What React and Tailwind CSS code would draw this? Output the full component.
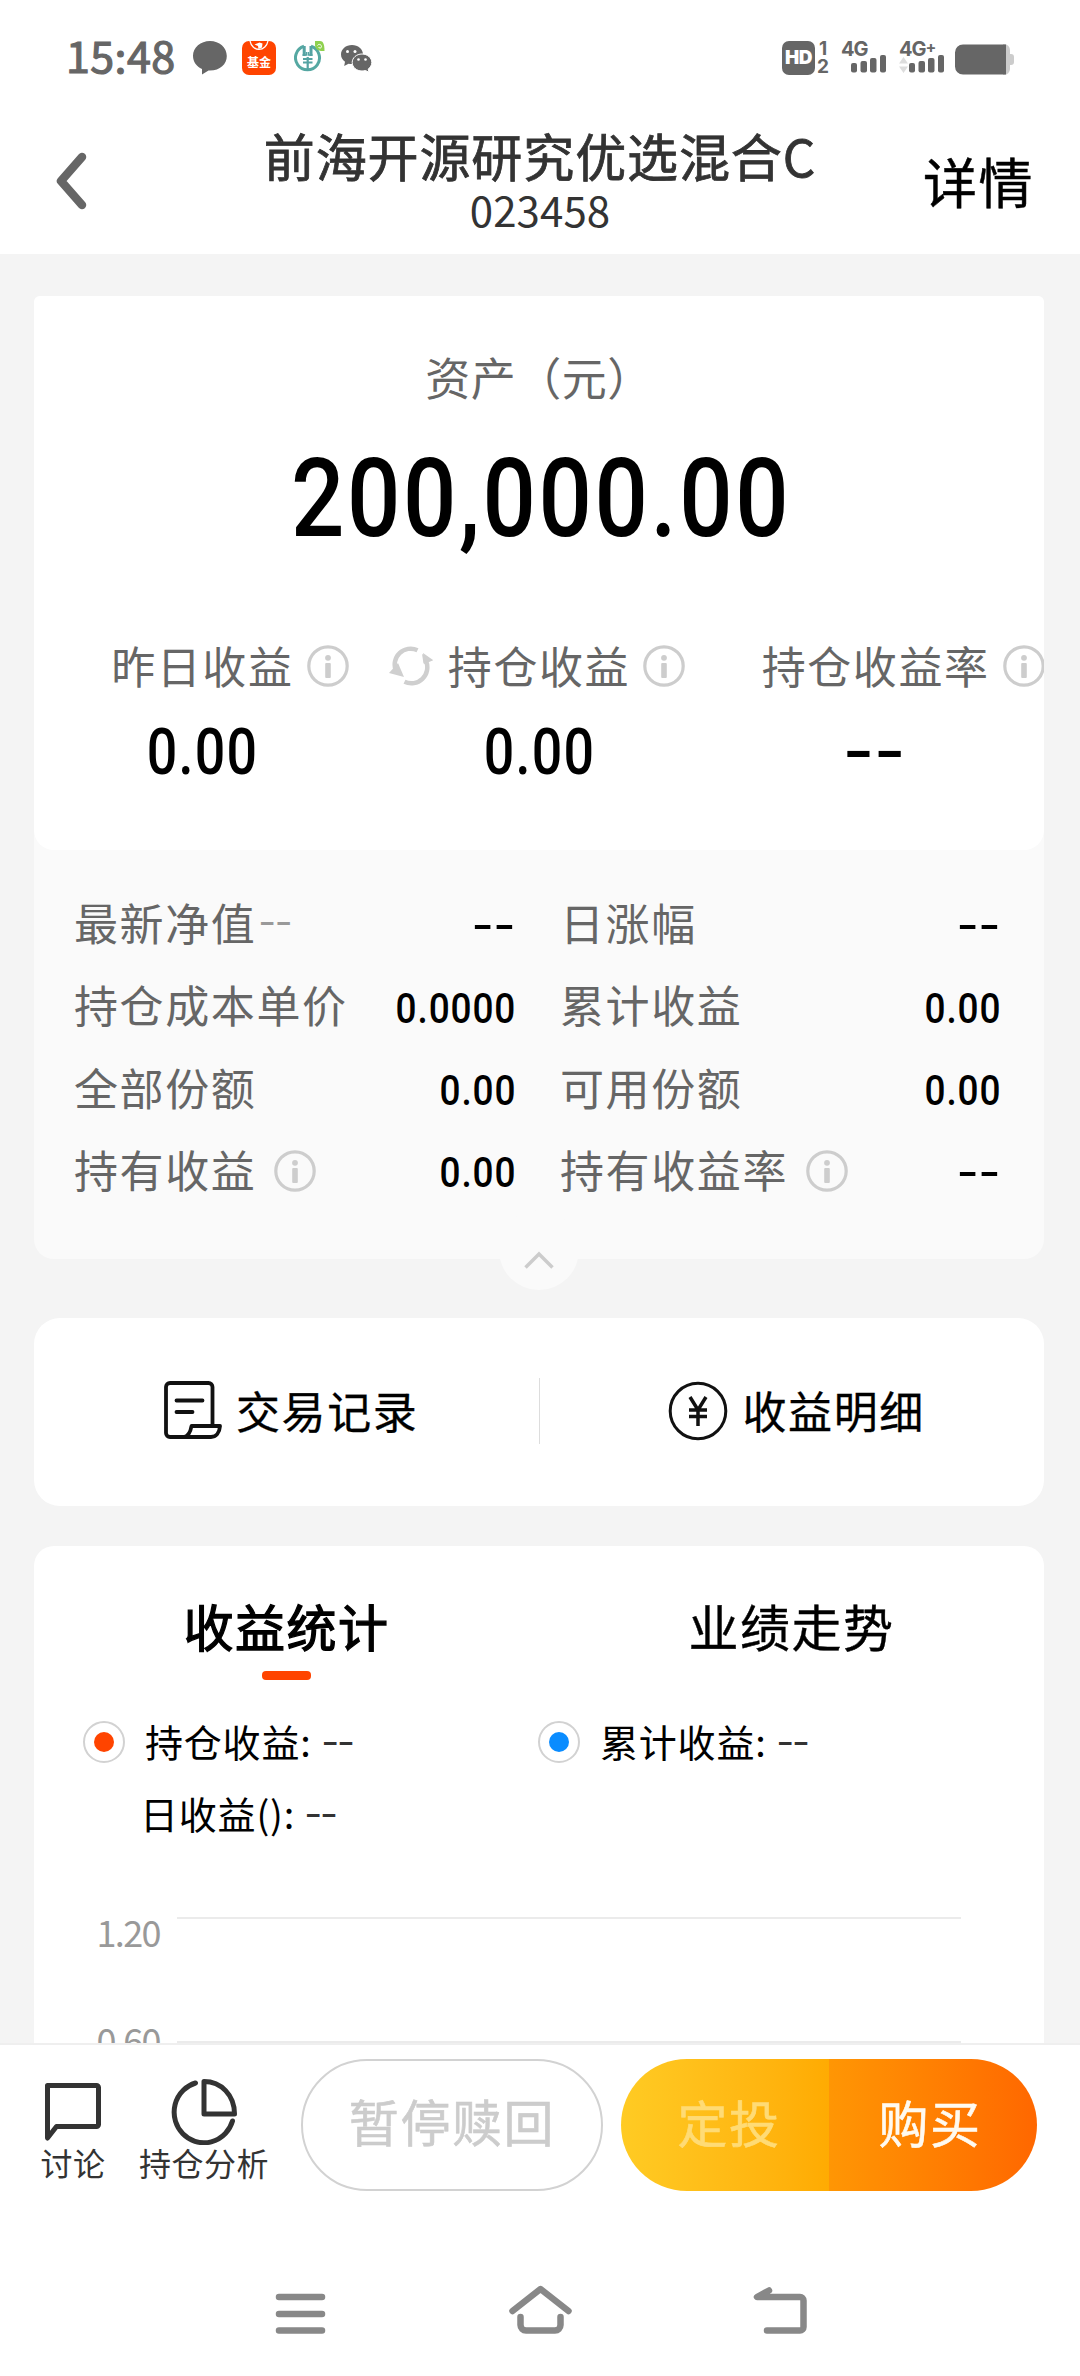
const details = [
  [
    { label: '最新净值', note: '--', value: '--' },
    { label: '日涨幅', value: '--' },
  ],
  [
    { label: '持仓成本单价', value: '0.0000' },
    { label: '累计收益', value: '0.00' },
  ],
  [
    { label: '全部份额', value: '0.00' },
    { label: '可用份额', value: '0.00' },
  ],
  [
    { label: '持有收益', value: '0.00', info: true },
    { label: '持有收益率', value: '--', info: true },
  ],
];

function InfoIcon({ className = '' }) {
  return (
    <svg className={`w-[42px] h-[42px] shrink-0 ${className}`} viewBox="0 0 42 42" fill="none">
      <circle cx="21" cy="21" r="19.2" stroke="#cdcdcd" strokeWidth="3.2" />
      <circle cx="21" cy="12.8" r="2.9" fill="#cdcdcd" />
      <rect x="18.2" y="18" width="5.6" height="15" rx="1" fill="#cdcdcd" />
    </svg>
  );
}

function RefreshIcon({ className = '' }) {
  return (
    <svg className={`w-[44px] h-[40px] ${className}`} viewBox="0 0 44 40" fill="none">
      <path d="M7 25A16 16 0 0 1 28.5 4.2" stroke="#cfcfcf" strokeWidth="4.500" />
      <path d="M37 15A16 16 0 0 1 15.5 35.8" stroke="#cfcfcf" strokeWidth="4.500" />
      <path d="M33 8l11 6.5-9.5 3z" fill="#cfcfcf" />
      <path d="M0 27l9-10 6 14z" fill="#cfcfcf" />
      <path d="M34 7l1 11 9-4z" fill="#cfcfcf" />
    </svg>
  );
}

function SignalBars() {
  return (
    <svg className="w-[36px] h-[18px]" viewBox="0 0 36 18" fill="#666">
      <rect x="0" y="8" width="6" height="9.500" rx="2" />
      <rect x="9.500" y="6" width="6.500" height="11.500" rx="2" />
      <rect x="19" y="3" width="6.500" height="14.500" rx="2" />
      <rect x="29" y="0" width="6" height="17.500" rx="2" />
    </svg>
  );
}

function StatusBar() {
  return (
    <div className="h-[116px] flex items-center text-[#666]">
      <span className="w-[125px] pl-[66px] pb-[7px] text-[43px] leading-none tracking-[0.4px] whitespace-nowrap [-webkit-text-stroke:1.2px_#666]">
        15:48
      </span>
      <svg className="ml-[68px] w-[34px] h-[34px]" viewBox="0 0 34 34" fill="#666">
        <path d="M17 0C7.600 0 0 6.500 0 14.800c0 6 3.500 10.800 9 13.200V33.500l6.500-4c11 .6 18.300-6 18.300-14.500C33.800 6.500 26.400 0 17 0z" />
      </svg>
      <span className="relative ml-[15px] w-[34px] h-[34px] rounded-[7px] bg-[#ff4400] text-white overflow-hidden flex justify-center">
        <svg className="absolute top-0 left-[7px] w-[20px] h-[12px]" viewBox="0 0 20 12" fill="none">
          <path d="M1 0a9.200 10.500 0 0 0 18 0" stroke="#fff" strokeWidth="1.300" />
          <path d="M5.500 3.500l5-2 3 1-.5 4-3.500 1.500-.5-3z" fill="#fff" />
        </svg>
        <span className="mt-[14px] text-[12px] leading-[14px] font-bold whitespace-nowrap">基金</span>
      </span>
      <svg className="ml-[18px] w-[32px] h-[34px]" viewBox="0 0 32 34" fill="none">
        <path d="M10 5.300a12 12 0 1 0 7 0" stroke="#55a8a2" strokeWidth="3" />
        <path d="M10.200 5v10M17 5v10" stroke="#55a3a3" strokeWidth="3" />
        <path d="M8.500 14h4v-3M18.500 14h-4v-3" stroke="#55a3a3" strokeWidth="1.500" />
        <path d="M9 18h4M14.500 18h4M9 21.500h9.500M13.700 16v14" stroke="#55a3a3" strokeWidth="2.200" />
        <path d="M21 0h5c3 0 4.500 3 4.500 10-6 .5-9.500-2-9.500-6z" fill="#8fd14f" />
        <path d="M23.500 4.500c1-2 4-1 4 1s-2.500 2-3 .5" stroke="#fff" strokeWidth="1" />
      </svg>
      <svg className="ml-[15px] w-[31px] h-[28px]" viewBox="0 0 31 28" fill="#666">
        <path d="M11 1C4.800 1 0 5.200 0 10.500c0 3 1.500 5.500 4 7.300L3.200 22l4.300-2.300c1.200.3 2.300.4 3.500.4 6 0 11-4.200 11-9.600S17 1 11 1z" />
        <path
          d="M21 10c-5.500 0-9.800 3.800-9.800 8.500s4.300 8.500 9.800 8.500c1.200 0 2.400-.2 3.500-.5l3.500 1.800-.8-3.300c2.200-1.600 3.600-3.900 3.600-6.500C30.800 13.800 26.500 10 21 10z"
          stroke="#fff"
          strokeWidth="1"
        />
        <circle cx="6.500" cy="7.500" r="1.500" fill="#fff" />
        <circle cx="14" cy="7.500" r="1.500" fill="#fff" />
        <circle cx="17.500" cy="15.500" r="1.300" fill="#fff" />
        <circle cx="24.500" cy="15.500" r="1.300" fill="#fff" />
      </svg>

      <span className="ml-auto w-[33px] h-[34px] rounded-[7px] bg-[#666] text-white flex items-center justify-center font-['Inter'] font-black text-[19px] tracking-[-0.5px]">
        HD
      </span>
      <span className="ml-[2px] w-[12px] h-[34px] flex flex-col items-center justify-between font-['Inter'] font-bold text-[19px] leading-[16px]">
        <span>1</span>
        <span>2</span>
      </span>
      <span className="ml-[12px] w-[46px] h-[34px] flex flex-col font-['Inter'] font-bold text-[20px] leading-[17px] tracking-[-1px]">
        <span>4G</span>
        <span className="pl-[10px] -mt-[3px]"><SignalBars /></span>
      </span>
      <span className="relative ml-[12px] w-[46px] h-[34px] flex flex-col font-['Inter'] font-bold text-[20px] leading-[17px] tracking-[-1px] whitespace-nowrap">
        <span>4G<sup className="text-[16px] top-[-3px]">+</sup></span>
        <svg className="absolute left-0 top-[16px] w-[9px] h-[16px]" viewBox="0 0 9 16" fill="#ddd">
          <path d="M4.500 0L9 6.500H0zM4.500 16L9 9.500H0z" />
        </svg>
        <span className="pl-[10px] -mt-[3px]"><SignalBars /></span>
      </span>
      <svg className="ml-[10px] mr-[66px] mt-[3px] w-[59px] h-[31px]" viewBox="0 0 59 31">
        <path d="M48 0h1a6 6 0 0 1 6 6v4h1a3 3 0 0 1 3 3v5a3 3 0 0 1-3 3h-1v4a6 6 0 0 1-6 6h-1z" fill="#ccc" />
        <path d="M51 .5H8a8 8 0 0 0-8 8v14a8 8 0 0 0 8 8h43z" fill="#666" />
      </svg>
    </div>
  );
}

function Header() {
  return (
    <div className="h-[138px] grid grid-cols-[200px_1fr_200px]">
      <svg className="ml-[56px] mt-[36px] w-[31px] h-[58px]" viewBox="0 0 31 58" fill="none">
        <path d="M26 5L5 29l21 24" stroke="#666" strokeWidth="8.500" strokeLinecap="round" strokeLinejoin="round" />
      </svg>
      <div className="pt-[10px] text-center text-[#333] whitespace-nowrap">
        <div className="text-[51px] leading-[58px] tracking-[0.9px] [-webkit-text-stroke:0.8px_#333]">前海开源研究优选混合C</div>
        <div className="mt-[2px] text-[42px] leading-[46px] tracking-[0.1px]">023458</div>
      </div>
      <div className="pr-[46px] pt-[33px] text-right text-[54px] leading-[64px] tracking-[1.500px] text-black [-webkit-text-stroke:0.5px_#000]">详情</div>
    </div>
  );
}

function Metric({ label, value, refresh }) {
  return (
    <div className="flex flex-col items-center">
      <div className="relative h-[50px] flex items-center text-[#666] whitespace-nowrap">
        {refresh && <RefreshIcon className="absolute right-full mr-[15px]" />}
        <span className="pb-[3px] text-[44px] leading-[50px] tracking-[1.600px]">{label}</span>
        <InfoIcon className="absolute left-full ml-[13px]" />
      </div>
      <div
        className={`mt-[30px] font-['Roboto'] font-medium text-[64px] leading-[64px] tracking-[1.500px] text-black ${
          value === '--' ? 'scale-x-[1.34]' : 'scale-x-[0.84]'
        }`}
      >
        {value}
      </div>
    </div>
  );
}

function AssetCard() {
  return (
    <div className="rounded-t-[6px] rounded-b-[20px] bg-[#fafafa] relative h-[963px]">
      <div className="h-[554px] rounded-t-[6px] rounded-b-[20px] bg-white overflow-hidden">
        <div className="pt-[53px] text-center text-[45px] leading-[56px] tracking-[0.5px] text-[#666]">资产（元）</div>
        <div className="mt-[40px] pl-[5px] text-center font-['Roboto'] font-medium text-[109px] leading-[109px] tracking-[3px] text-black scale-x-[0.862]">
          200,000.00
        </div>
        <div className="mt-[87px] grid grid-cols-3">
          <Metric label="昨日收益" value="0.00" />
          <Metric label="持仓收益" value="0.00" refresh />
          <Metric label="持仓收益率" value="--" />
        </div>
      </div>
      <div className="pt-[33px] pl-[40px] pr-[43px]">
        {details.map((row) => (
          <div key={row[0].label} className="h-[82.300px] grid grid-cols-[442px_441px] gap-[44px]">
            {row.map((item) => (
              <div key={item.label} className="flex items-center text-[44px] tracking-[1.600px] text-[#666] whitespace-nowrap">
                <span className="pb-[4px]">{item.label}</span>
                {item.note && (
                  <span className="font-['Roboto'] text-[#999] text-[40px] ml-[4px] pb-[2px] scale-x-[1.300] origin-left">{item.note}</span>
                )}
                {item.info && <InfoIcon className="ml-[18px]" />}
                <span
                  className={`ml-auto pt-[3px] font-['Roboto'] font-medium text-[43px] tracking-[1px] text-black origin-right ${
                    item.value === '--' ? 'scale-x-[1.400]' : 'scale-x-[0.860]'
                  }`}
                >
                  {item.value}
                </span>
              </div>
            ))}
          </div>
        ))}
      </div>
      <div className="absolute left-[465px] top-[914px] w-[80px] h-[80px] rounded-full bg-[#fafafa] flex justify-center">
        <svg className="mt-[41px] w-[30px] h-[18px]" viewBox="0 0 30 18" fill="none">
          <path d="M1.500 16.500L15 3l13.500 13.500" stroke="#ccc" strokeWidth="3.500" />
        </svg>
      </div>
    </div>
  );
}

function LinksCard() {
  return (
    <div className="mt-[59px] h-[188px] rounded-[26px] bg-white flex items-center text-[44px] tracking-[1.600px] text-black whitespace-nowrap [-webkit-text-stroke:0.3px_#000]">
      <div className="flex-1 flex items-center pl-[128px]">
        <svg className="-mt-[5px] w-[60px] h-[60px]" viewBox="0 0 60 60" fill="none" stroke="#111" strokeWidth="3.800" strokeLinejoin="round" strokeLinecap="round">
          <path d="M50.500 45V7a4 4 0 0 0-4-4H8a4 4 0 0 0-4 4v46a4 4 0 0 0 4 4h41c5 0 8.500-4 9-11H29.500c-1 6-2.500 10-7.500 11" />
          <path d="M14.500 20.500h26M14.500 32h16" />
        </svg>
        <span className="ml-[14px] pb-[4px]">交易记录</span>
      </div>
      <div className="w-px h-[66px] -mt-[2px] bg-[#ddd]" />
      <div className="flex-1 flex items-center pl-[128px]">
        <svg className="-mt-[2px] w-[60px] h-[60px]" viewBox="0 0 60 60" fill="none" stroke="#111" strokeWidth="3">
          <circle cx="30" cy="30" r="27.800" />
          <path d="M22 16l8 13 8-13M30 29v16M21 29h18M21 35.500h18" strokeWidth="3.500" />
        </svg>
        <span className="ml-[15px] pb-[4px]">收益明细</span>
      </div>
    </div>
  );
}

function Dashes() {
  return <span className="ml-[11px] font-['Roboto'] text-[38px] text-[#333] tracking-[1px] scale-x-[1.380] origin-left">--</span>;
}

function StatsCard() {
  return (
    <div className="mt-[40px] h-[497px] rounded-t-[20px] bg-white overflow-hidden text-black">
      <div className="grid grid-cols-2 text-center text-[50px] leading-[60px] tracking-[1.500px] pt-[49px]">
        <div className="flex flex-col items-center">
          <span className="[-webkit-text-stroke:1.300px_#000]">收益统计</span>
          <span className="mt-[16px] w-[49px] h-[9px] rounded-[4px] bg-[#ff4400]" />
        </div>
        <div className="[-webkit-text-stroke:0.4px_#000]">业绩走势</div>
      </div>
      <div className="mt-[41px] pl-[49px] grid grid-cols-[455px_1fr] text-[38px] leading-[42px] tracking-[0.8px] whitespace-nowrap">
        <div className="flex items-center">
          <span className="w-[42px] h-[42px] rounded-full border-2 border-[#d2d2d2] flex items-center justify-center">
            <span className="w-[20px] h-[20px] rounded-full bg-[#ff4400]" />
          </span>
          <span className="ml-[20px] -mt-[3px]">持仓收益:</span>
          <Dashes />
        </div>
        <div className="flex items-center">
          <span className="w-[42px] h-[42px] rounded-full border-2 border-[#d2d2d2] flex items-center justify-center">
            <span className="w-[20px] h-[20px] rounded-full bg-[#0a8cff]" />
          </span>
          <span className="ml-[20px] -mt-[3px]">累计收益:</span>
          <Dashes />
        </div>
        <div className="mt-[30px] flex items-center pl-[57px]">
          <span className="-mt-[3px]">日收益():</span>
          <Dashes />
        </div>
      </div>
      <div className="mt-[82px] pl-[46px] flex text-[36px] leading-[36px] text-[#999]">
        <div className="w-[80px] -mt-[4px] text-right tracking-[-1.600px]">
          <div>1.20</div>
          <div className="mt-[72px]">0.60</div>
        </div>
        <div className="ml-[17px] w-[784px] h-[126px] border-y-[2px] border-[#ebebeb]" />
      </div>
    </div>
  );
}

function BottomBar() {
  return (
    <div className="h-[195px] border-t-[2px] border-[#efefef] bg-white flex pt-[14px] text-[#333] whitespace-nowrap">
      <div className="ml-[38px] w-[70px] flex flex-col items-center text-[32px] leading-[36px] tracking-[0.5px]">
        <svg className="mt-[22px] w-[58px] h-[60px]" viewBox="0 0 58 60" fill="none">
          <path d="M3.500 4.500h49a2 2 0 0 1 2 2v37a2 2 0 0 1-2 2H12.500L3.500 57z" stroke="#333" strokeWidth="5" strokeLinejoin="round" />
        </svg>
        <span className="mt-[3px]">讨论</span>
      </div>
      <div className="ml-[30px] w-[132px] flex flex-col items-center text-[32px] leading-[36px] tracking-[0.5px]">
        <svg className="mt-[19px] w-[66px] h-[67px]" viewBox="0 0 66 67" fill="none" stroke="#333" strokeWidth="5" strokeLinecap="round" strokeLinejoin="round">
          <path d="M24.500 5A29.800 30.500 0 1 0 61.500 43" />
          <path d="M33 3.500V36h30.500C63.500 17 50 3.500 33 3.500z" />
        </svg>
        <span className="-mt-[1px]">持仓分析</span>
      </div>
      <div className="ml-[31px] w-[302px] h-[132px] rounded-full border-2 border-[#d2d2d2] flex items-center justify-center text-[50px] tracking-[1.600px] text-[#ccc] pb-[9px] [-webkit-text-stroke:0.6px_#ccc]">
        暂停赎回
      </div>
      <div className="ml-[18px] w-[416px] h-[132px] rounded-full overflow-hidden grid grid-cols-2 text-[50px] tracking-[1.600px] text-white [-webkit-text-stroke:0.6px]">
        <div className="bg-linear-to-r from-[#ffcb23] to-[#ffab02] flex items-center justify-center pb-[8px] pl-[8px] text-[#ffdb75]">定投</div>
        <div className="bg-linear-to-r from-[#ff9604] to-[#ff6700] flex items-center justify-center pb-[8px] pr-[6px] text-[#fffaf0]">购买</div>
      </div>
    </div>
  );
}

function SystemNav() {
  return (
    <div className="h-[138px] bg-white flex items-start pt-[43px] pl-[272px]">
      <svg className="w-[56px] h-[56px]" viewBox="0 0 56 56" stroke="#888" strokeWidth="6.500" strokeLinecap="round">
        <path d="M7 16h43M7 33h43M7 49.500h43" />
      </svg>
      <svg className="ml-[178px] w-[68px] h-[56px]" viewBox="0 0 68 56" fill="none" stroke="#888" strokeWidth="6.500" strokeLinecap="round" strokeLinejoin="round">
        <path d="M6.500 30L34.500 8l28 22" />
        <path d="M14.500 36v8a5.500 5.500 0 0 0 5.500 5.500h29a5.500 5.500 0 0 0 5.500-5.500v-8" />
      </svg>
      <svg className="ml-[176px] w-[60px] h-[56px]" viewBox="0 0 60 56" fill="none" stroke="#888" strokeWidth="6.500" strokeLinecap="round" strokeLinejoin="round">
        <path d="M19 9.500L7 16h43a3.500 3.500 0 0 1 3.500 3.500V46a3.500 3.500 0 0 1-3.500 3.500H17" />
      </svg>
    </div>
  );
}

export default function App() {
  return (
    <div className="w-[1080px] h-[2376px] flex flex-col overflow-hidden bg-white font-['Noto_Sans_CJK_SC',sans-serif]">
      <StatusBar />
      <Header />
      <main className="flex-1 bg-[#f4f4f4] pt-[42px] pl-[34px] pr-[36px]">
        <AssetCard />
        <LinksCard />
        <StatsCard />
      </main>
      <BottomBar />
      <SystemNav />
    </div>
  );
}
